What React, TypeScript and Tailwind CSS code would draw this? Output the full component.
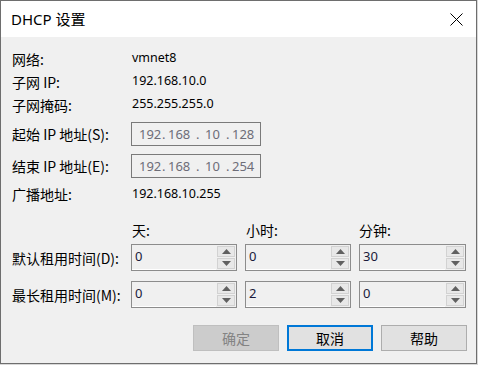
import React from "react";

const cjk = { fontFamily: '"Noto Sans CJK SC", "Noto Sans", sans-serif' };
const lat = { fontFamily: '"Noto Sans", "Noto Sans CJK SC", sans-serif' };

function Label({ children, w = "w-[120px]" }: { children: React.ReactNode; w?: string }) {
  return (
    <div className={`${w} shrink-0 text-[14px] text-black leading-none whitespace-nowrap`} style={cjk}>
      {children}
    </div>
  );
}

function Value({ children }: { children: React.ReactNode }) {
  return (
    <div className="text-[12.5px] text-black leading-none" style={lat}>
      {children}
    </div>
  );
}

function IpBox({ parts }: { parts: string[] }) {
  return (
    <div
      className="w-[130px] h-[24px] border border-[#7a7a7a] bg-[#f0f0f0] flex items-center pl-[7px] text-[13px] text-[#6d6d78] whitespace-pre leading-none"
      style={lat}
    >
      <span className="w-[23px]">{parts[0]}</span>
      <span className="w-[6px]">.</span>
      <span className="w-[28px]">{parts[1]}</span>
      <span className="w-[9px]">.</span>
      <span className="w-[21px]">{parts[2]}</span>
      <span className="w-[6px]">.</span>
      <span>{parts[3]}</span>
    </div>
  );
}

function Arrow({ up }: { up?: boolean }) {
  return (
    <svg width="9" height="5" viewBox="0 0 9 5">
      {up ? <polygon points="0,5 9,5 4.5,0" fill="#606060" /> : <polygon points="0,0 9,0 4.5,5" fill="#606060" />}
    </svg>
  );
}

function Spin({ value, w = "w-[106px]" }: { value: string; w?: string }) {
  return (
    <div className={`${w} h-[27px] border border-[#8c8c8c] flex bg-[#f0f0f0]`}>
      <div className="flex-1 border-b border-white pl-[3px] pt-[5px] text-[13px] text-[#1a1a3a] leading-none" style={lat}>
        {value}
      </div>
      <div className="w-[20px] flex flex-col p-[1px] gap-[1px] bg-[#f0f0f0]">
        <div className="flex-1 border border-[#d2d2d2] bg-[#e8e8e8] flex items-center justify-center">
          <Arrow up />
        </div>
        <div className="flex-1 border border-[#d2d2d2] bg-[#e8e8e8] flex items-center justify-center">
          <Arrow />
        </div>
      </div>
    </div>
  );
}

export default function App() {
  return (
    <div className="w-[478px] h-[365px] bg-[#d8d8d8]">
      <div className="w-[477px] h-[364px] border border-[#6e6e6e] bg-[#f0f0f0] flex flex-col">
        <div className="h-[36px] bg-white flex items-center justify-between pl-[10px] pr-[13px] shrink-0">
          <div className="text-[15px] text-black leading-none" style={lat}>
            DHCP 设置
          </div>
          <svg width="13" height="13" viewBox="0 0 13 13">
            <path d="M0.5 0.5 L12.5 12.5 M12.5 0.5 L0.5 12.5" stroke="#000" strokeWidth="1" />
          </svg>
        </div>

        <div className="flex flex-col pl-[11px] pt-[10px]">
          <div className="h-[23px] flex items-center">
            <Label>网络:</Label>
            <Value>vmnet8</Value>
          </div>
          <div className="h-[23px] flex items-center">
            <Label>子网 IP:</Label>
            <Value>192.168.10.0</Value>
          </div>
          <div className="h-[23px] flex items-center">
            <Label>子网掩码:</Label>
            <Value>255.255.255.0</Value>
          </div>

          <div className="h-[24px] mt-[6px] flex items-center">
            <Label w="w-[119px]">起始 IP 地址(S):</Label>
            <IpBox parts={["192", "168", "10", "128"]} />
          </div>
          <div className="h-[24px] mt-[8px] flex items-center">
            <Label w="w-[119px]">结束 IP 地址(E):</Label>
            <IpBox parts={["192", "168", "10", "254"]} />
          </div>
          <div className="h-[20px] mt-[6px] flex items-center">
            <Label>广播地址:</Label>
            <Value>192.168.10.255</Value>
          </div>

          <div className="h-[20px] mt-[16px] flex items-center">
            <div className="w-[120px] shrink-0" />
            <div className="w-[114px] text-[14px] leading-none" style={cjk}>天:</div>
            <div className="w-[113px] text-[14px] leading-none" style={cjk}>小时:</div>
            <div className="text-[14px] leading-none" style={cjk}>分钟:</div>
          </div>

          <div className="h-[27px] mt-[4px] flex items-center">
            <Label w="w-[119px]">默认租用时间(D):</Label>
            <div className="flex gap-[8px]">
              <Spin value="0" />
              <Spin value="0" />
              <Spin value="30" w="w-[107px]" />
            </div>
          </div>
          <div className="h-[27px] mt-[10px] flex items-center">
            <Label w="w-[119px]">最长租用时间(M):</Label>
            <div className="flex gap-[8px]">
              <Spin value="0" />
              <Spin value="2" />
              <Spin value="0" w="w-[107px]" />
            </div>
          </div>
        </div>

        <div className="flex justify-end gap-[8px] pr-[9px] mt-[17px]">
          <div
            className="w-[86px] h-[26px] border border-[#bfbfbf] bg-[#cccccc] flex items-center justify-center text-[14px] text-[#838383]"
            style={cjk}
          >
            确定
          </div>
          <div
            className="w-[86px] h-[26px] border-2 border-[#0078d7] bg-[#e1e1e1] flex items-center justify-center text-[14px] text-black"
            style={cjk}
          >
            取消
          </div>
          <div
            className="w-[86px] h-[26px] border border-[#adadad] bg-[#e1e1e1] flex items-center justify-center text-[14px] text-black"
            style={cjk}
          >
            帮助
          </div>
        </div>
      </div>
    </div>
  );
}
